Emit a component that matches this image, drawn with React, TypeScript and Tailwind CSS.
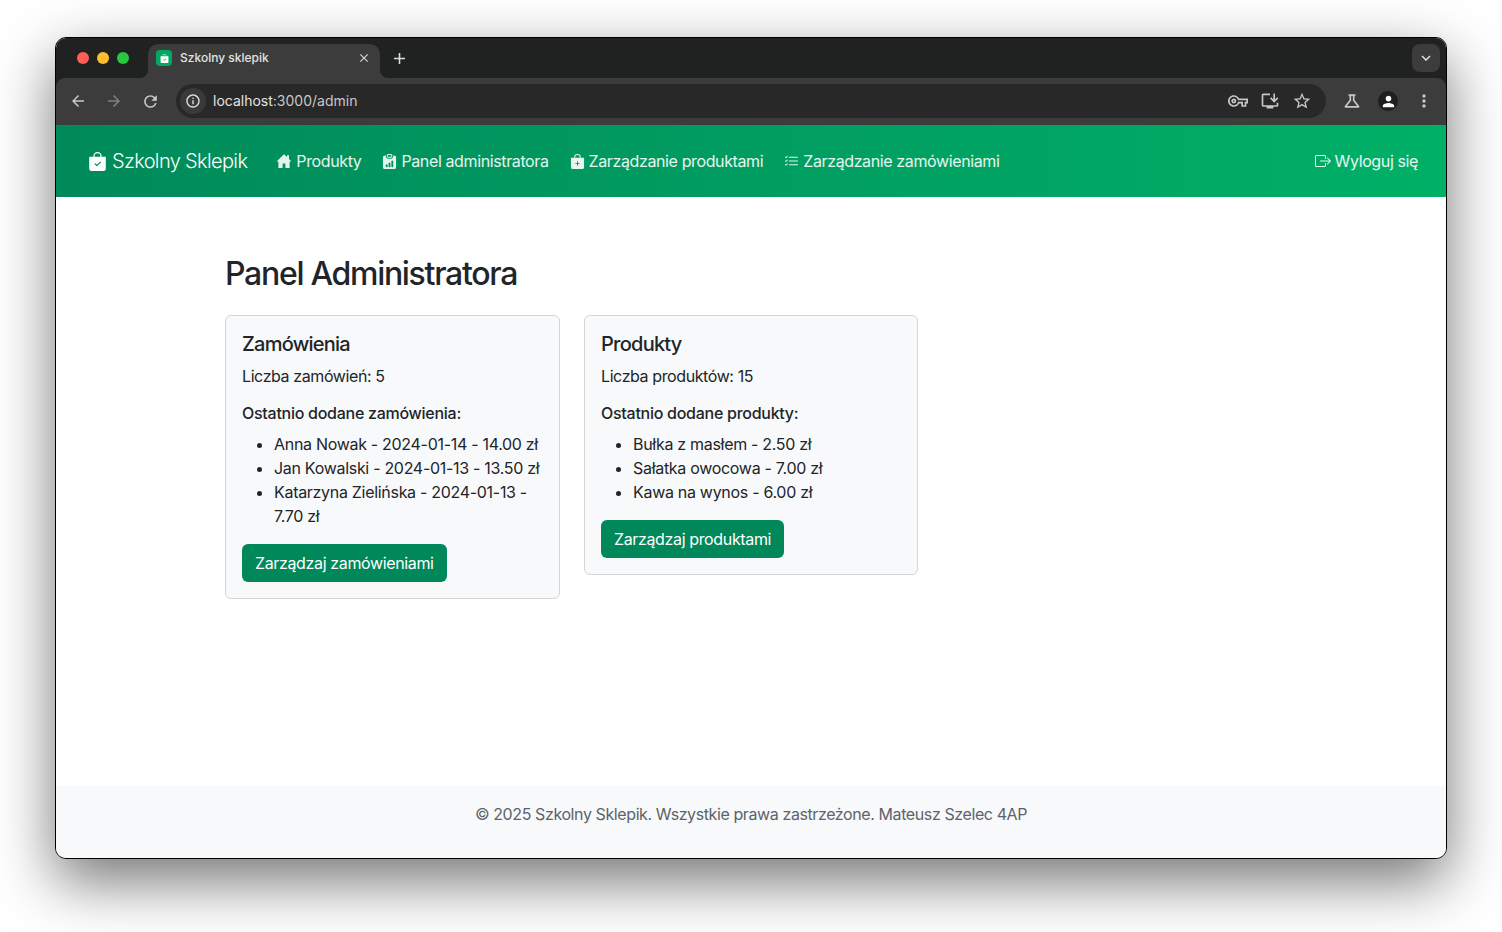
import { BsBagCheckFill, BsBagPlusFill, BsBoxArrowRight, BsClipboardDataFill, BsListCheck } from "react-icons/bs";
import { MdArrowBack, MdArrowForward, MdClose, MdInfoOutline, MdKeyboardArrowDown, MdMoreVert, MdOutlineInstallDesktop, MdOutlineScience, MdOutlineVpnKey, MdPerson, MdRefresh, MdStarBorder, MdAdd } from "react-icons/md";

const orders = ["Anna Nowak - 2024-01-14 - 14.00 zł", "Jan Kowalski - 2024-01-13 - 13.50 zł", "Katarzyna Zielińska - 2024-01-13 - 7.70 zł"];
const products = ["Bułka z masłem - 2.50 zł", "Sałatka owocowa - 7.00 zł", "Kawa na wynos - 6.00 zł"];

function HouseIcon() {
  return (
    <svg className="h-4 w-4" viewBox="0 0 16 16" fill="currentColor">
      <path d="M8 1.2 .6 8.4h1.8V15h4.2v-4.4h2.8V15h4.2V8.4h1.8L13 5.9V2.2h-2v1.8Z" />
    </svg>
  );
}

function Card({ title, count, heading, items, button }: { title: string; count: string; heading: string; items: string[]; button: string }) {
  return (
    <div className="self-start rounded-md border border-[#d3d5d7] bg-[#f8f9fa] p-4 tracking-[-0.4px] text-[#212529]">
      <h5 className="mb-2 text-[20px] leading-6 font-[450] tracking-[-0.75px]">{title}</h5>
      <p className="mb-4 leading-6">{count}</p>
      <h6 className="mb-[9px] leading-[19px] font-[450] tracking-[-0.27px]">{heading}</h6>
      <ul className="mb-4 list-disc pl-8 leading-6 tracking-[-0.3px]">
        {items.map((item) => (
          <li key={item}>{item}</li>
        ))}
      </ul>
      <button className="h-[38px] rounded-md bg-[#00875a] px-[13px] tracking-[-0.36px] text-white">{button}</button>
    </div>
  );
}

function NavLink({ icon, label }: { icon: React.ReactNode; label: string }) {
  return (
    <a href="#" className="flex items-center gap-1 tracking-[-0.38px] text-white/90">
      {icon}
      <span>{label}</span>
    </a>
  );
}

export default function App() {
  return (
    <div className="h-[932px] w-[1502px] bg-white pt-[37px] pl-[55px] font-['Inter',sans-serif] text-base">
      <div className="flex h-[822px] w-[1392px] flex-col overflow-hidden rounded-[11px] border border-black bg-white shadow-[0_22px_60px_0_rgba(0,0,0,0.55)]">
        <div className="shrink-0 bg-[#202222]">
          {/* Tab strip */}
          <div className="flex h-[40px] items-end pl-[21px]">
            <div className="flex h-[34px] items-center gap-2 self-end pb-[7px]">
              <span className="h-3 w-3 rounded-full bg-[#ff5f57]" />
              <span className="h-3 w-3 rounded-full bg-[#febc2e]" />
              <span className="h-3 w-3 rounded-full bg-[#28c840]" />
            </div>
            <div className="relative ml-[19px] flex h-[34px] w-[232px] items-center rounded-t-[10px] bg-[#3c3c3c] pr-[9px] pb-[6px] pl-[8px]">
              <svg className="absolute bottom-0 -left-2 h-2 w-2" viewBox="0 0 8 8">
                <path d="M8 0A8 8 0 0 1 0 8H8Z" fill="#3c3c3c" />
              </svg>
              <svg className="absolute -right-2 bottom-0 h-2 w-2" viewBox="0 0 8 8">
                <path d="M0 0A8 8 0 0 0 8 8H0Z" fill="#3c3c3c" />
              </svg>
              <span className="flex h-4 w-4 items-center justify-center rounded-[4px] bg-[#00a862]">
                <BsBagCheckFill className="text-[9px] text-white" />
              </span>
              <span className="ml-2 flex-1 text-xs font-medium text-[#e3e3e3]">Szkolny sklepik</span>
              <MdClose className="text-[14px] text-[#d5d5d5]" />
            </div>
            <div className="flex h-[34px] w-[39px] items-center justify-center pb-[6px]">
              <MdAdd className="text-[19px] text-[#dcdcdc]" />
            </div>
            <div className="mt-[6px] mr-[6px] ml-auto flex h-7 w-7 items-center justify-center self-start rounded-lg bg-[#3c3c3c]">
              <MdKeyboardArrowDown className="text-[18px] text-[#e3e3e3]" />
            </div>
          </div>
          {/* Toolbar */}
          <div className="flex h-[47px] items-center rounded-t-[9px] bg-[#3c3c3c] pb-[1px] pl-[13px] text-[#c7c7c7]">
            <MdArrowBack className="text-[18px]" />
            <MdArrowForward className="ml-[18px] text-[18px] text-[#808080]" />
            <MdRefresh className="ml-[18px] text-[19px]" />
            <div className="ml-[16px] flex h-[34px] w-[1150px] items-center rounded-full bg-[#282828] pr-[14px] pl-[4px]">
              <span className="flex h-[26px] w-[26px] items-center justify-center rounded-full bg-[#3a3a3a]">
                <MdInfoOutline className="text-[16px] text-[#e3e3e3]" />
              </span>
              <span className="ml-[7px] flex-1 text-sm">
                <span className="text-[#e3e3e3]">localhost</span>:3000/admin
              </span>
              <MdOutlineVpnKey className="text-[20px]" />
              <MdOutlineInstallDesktop className="ml-[12px] text-[20px]" />
              <MdStarBorder className="ml-[12px] text-[20px]" />
            </div>
            <MdOutlineScience className="ml-[16px] text-[20px]" />
            <span className="ml-[16px] flex h-[20px] w-[20px] items-center justify-center rounded-full bg-[#1f1f1f]">
              <MdPerson className="text-[17px] text-white" />
            </span>
            <MdMoreVert className="ml-[16px] text-[20px]" />
          </div>
        </div>
        {/* Navbar */}
        <nav className="flex h-[72px] shrink-0 items-center bg-gradient-to-r from-[#008a5a] to-[#00b067] pr-7 pl-[32px] text-white">
          <a href="#" className="mr-[29px] flex items-center gap-[5px] text-[20px] font-light tracking-[-0.65px] text-white">
            <BsBagCheckFill className="text-[19px]" />
            Szkolny Sklepik
          </a>
          <div className="flex items-center gap-[21px]">
            <NavLink icon={<HouseIcon />} label="Produkty" />
            <NavLink icon={<BsClipboardDataFill className="text-[15px]" />} label="Panel administratora" />
            <NavLink icon={<BsBagPlusFill className="text-[15px]" />} label="Zarządzanie produktami" />
            <NavLink icon={<BsListCheck className="text-[15px]" />} label="Zarządzanie zamówieniami" />
          </div>
          <div className="ml-auto">
            <NavLink icon={<BsBoxArrowRight className="text-[16px]" />} label="Wyloguj się" />
          </div>
        </nav>
        {/* Content */}
        <main className="flex-1 px-[169px] pt-[57px]">
          <h1 className="mb-[21px] text-[32px] leading-[40px] font-[450] tracking-[-1.3px] text-[#212529]">Panel Administratora</h1>
          <div className="grid grid-cols-[335px_334px] items-start gap-6">
            <Card title="Zamówienia" count="Liczba zamówień: 5" heading="Ostatnio dodane zamówienia:" items={orders} button="Zarządzaj zamówieniami" />
            <Card title="Produkty" count="Liczba produktów: 15" heading="Ostatnio dodane produkty:" items={products} button="Zarządzaj produktami" />
          </div>
        </main>
        <footer className="h-[72px] shrink-0 bg-[#f8f9fa] pt-4 text-center leading-6 tracking-[-0.4px] text-[#5c636a]">
          © 2025 Szkolny Sklepik. Wszystkie prawa zastrzeżone. Mateusz Szelec 4AP
        </footer>
      </div>
    </div>
  );
}
